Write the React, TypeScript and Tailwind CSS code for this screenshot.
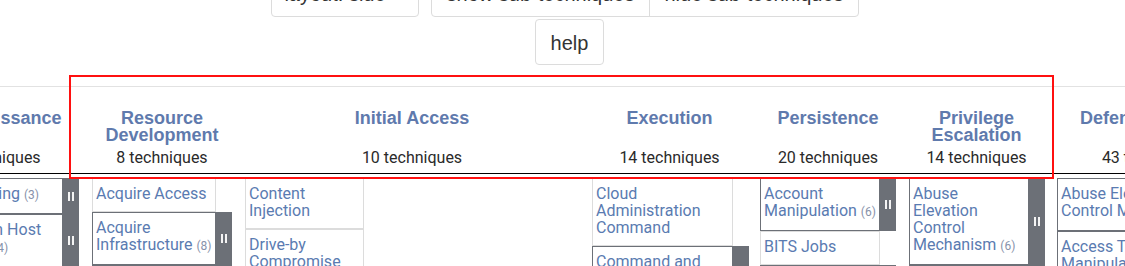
import React from "react";

type Tech = { lines: string[]; sub?: number };
type Col = {
  name: string[];
  count: number;
  colW: string;
  cellW: string;
  techs: Tech[];
};

const cols: Col[] = [
  {
    name: ["Reconnaissance"],
    count: 10,
    colW: "w-[177px]",
    cellW: "w-[161px]",
    techs: [
      { lines: ["Active Scanning"], sub: 3 },
      { lines: ["Gather Victim Host", "Information"], sub: 4 },
      { lines: ["Gather Victim Identity", "Information"], sub: 3 },
    ],
  },
  {
    name: ["Resource", "Development"],
    count: 8,
    colW: "w-[140px]",
    cellW: "w-[124px]",
    techs: [
      { lines: ["Acquire Access"] },
      { lines: ["Acquire", "Infrastructure"], sub: 8 },
      { lines: ["Compromise", "Accounts"], sub: 3 },
    ],
  },
  {
    name: ["Initial Access"],
    count: 10,
    colW: "w-[334px]",
    cellW: "w-[119px]",
    techs: [{ lines: ["Content", "Injection"] }, { lines: ["Drive-by", "Compromise"] }],
  },
  {
    name: ["Execution"],
    count: 14,
    colW: "w-[155px]",
    cellW: "w-[141px]",
    techs: [
      { lines: ["Cloud", "Administration", "Command"] },
      { lines: ["Command and", "Scripting", "Interpreter"], sub: 12 },
    ],
  },
  {
    name: ["Persistence"],
    count: 20,
    colW: "w-[136px]",
    cellW: "w-[120px]",
    techs: [
      { lines: ["Account", "Manipulation"], sub: 6 },
      { lines: ["BITS Jobs"] },
      { lines: ["Boot or Logon", "Autostart", "Execution"], sub: 14 },
    ],
  },
  {
    name: ["Privilege", "Escalation"],
    count: 14,
    colW: "w-[135px]",
    cellW: "w-[120px]",
    techs: [
      { lines: ["Abuse", "Elevation", "Control", "Mechanism"], sub: 6 },
      { lines: ["Access Token", "Manipulation"], sub: 5 },
    ],
  },
  {
    name: ["Defense Evasion"],
    count: 43,
    colW: "w-[190px]",
    cellW: "w-[174px]",
    techs: [
      { lines: ["Abuse Elevation", "Control Mechanism"], sub: 6 },
      { lines: ["Access Token", "Manipulation"], sub: 5 },
    ],
  },
];

function Handle() {
  return (
    <div className="flex gap-[2px]">
      <div className="w-[2px] h-[9px] bg-[#f4f4f4]" />
      <div className="w-[2px] h-[9px] bg-[#f4f4f4]" />
    </div>
  );
}

function TechRow({ t, cellW }: { t: Tech; cellW: string }) {
  const hasSub = t.sub !== undefined;
  return (
    <div className="flex items-stretch">
      <div
        className={`${cellW} shrink-0 border pl-[3px] pr-0 pt-[6px] pb-[9px] text-[16px] leading-[17px] text-[#5a7bb1] whitespace-nowrap overflow-hidden ${
          hasSub ? "border-[#6c7077]" : "border-[#dcdcdc]"
        }`}
      >
        {t.lines.map((l, i) => (
          <div key={i}>
            {l}
            {hasSub && i === t.lines.length - 1 && (
              <>
                {" "}
                <span className="text-[12px] text-[#8792aa]">({t.sub})</span>
              </>
            )}
          </div>
        ))}
      </div>
      {hasSub ? (
        <div className="w-[16px] shrink-0 bg-[#6c7077] flex items-center justify-center">
          <Handle />
        </div>
      ) : (
        <div className="w-[16px] shrink-0" />
      )}
    </div>
  );
}

export default function App() {
  return (
    <div
      className="relative w-[1125px] h-[266px] overflow-hidden bg-white"
      style={{ fontFamily: "Roboto, 'Liberation Sans', sans-serif" }}
    >
      {/* Toolbar */}
      <div className="-mt-[29px] text-[20px] text-[#333] font-['Liberation_Sans',Arial,sans-serif]">
        <div className="flex pl-[271px] gap-[12px] h-[46px]">
          <div className="w-[148px] h-[46px] border border-[#dcdcdc] rounded-[4px] flex items-center justify-center gap-[8px]">
            <span>layout: side</span>
            <svg width="12" height="8" viewBox="0 0 12 8" className="mt-[-2px]">
              <path d="M1 1 L6 6 L11 1" stroke="#333" strokeWidth="2" fill="none" />
            </svg>
          </div>
          <div className="flex h-[46px] border border-[#dcdcdc] rounded-[4px]">
            <div className="w-[218px] flex items-center justify-center border-r border-[#dcdcdc]">
              show sub-techniques
            </div>
            <div className="w-[208px] flex items-center justify-center">hide sub-techniques</div>
          </div>
        </div>
        <div className="flex pl-[535px] mt-[2px]">
          <div className="w-[69px] h-[46px] border border-[#dcdcdc] rounded-[4px] flex items-center justify-center pt-[2px]">
            help
          </div>
        </div>
      </div>

      {/* Matrix */}
      <div className="mt-[21px] -ml-[98px] w-[1400px]">
        <div className="flex gap-[13px] border-t border-[#e2e2e2] border-b border-b-[#000]">
          {cols.map((c) => (
            <div
              key={c.name.join(" ")}
              className={`${c.colW} shrink-0 h-[86px] flex flex-col items-center text-center`}
            >
              <div className="pt-[23px] px-[4px] text-[18px] leading-[17px] font-bold text-[#5f7aad] font-['Liberation_Sans',Arial,sans-serif] whitespace-nowrap">
                {c.name.map((n, i) => (
                  <div key={i}>{n}</div>
                ))}
              </div>
              <div className="mt-auto pb-[5px] text-[16px] leading-[20px] text-[#2a2a2a]">
                {c.count} techniques
              </div>
            </div>
          ))}
        </div>
        <div className="flex gap-[13px] mt-[4px] items-start">
          {cols.map((c) => (
            <div key={c.name.join(" ")} className={`${c.colW} shrink-0 flex flex-col`}>
              {c.techs.map((t) => (
                <TechRow key={t.lines.join(" ")} t={t} cellW={c.cellW} />
              ))}
            </div>
          ))}
        </div>
      </div>

      {/* Red annotation box */}
      <div className="absolute left-[69px] top-[75px] w-[985px] h-[104px] border-2 border-[#ff1010] pointer-events-none" />
    </div>
  );
}
